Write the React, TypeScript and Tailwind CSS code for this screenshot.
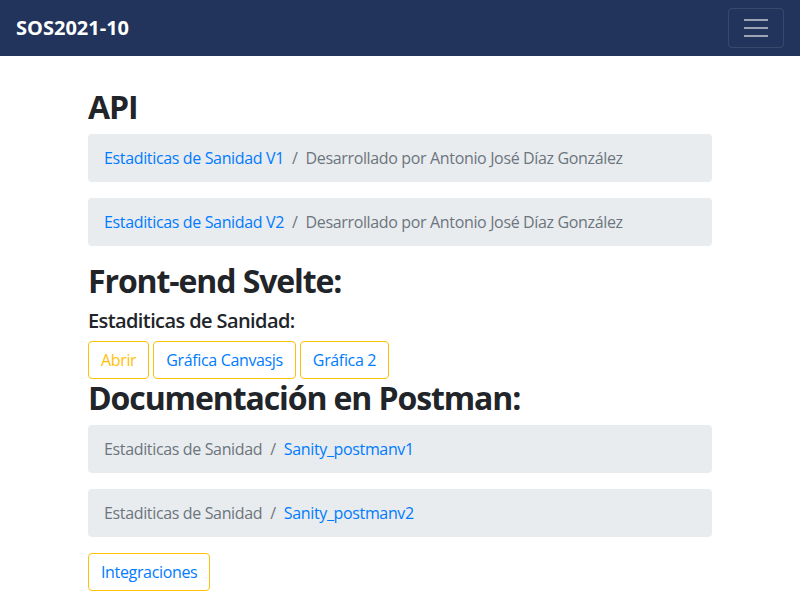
import React from 'react'

const font = { fontFamily: '"Open Sans", "Noto Sans", sans-serif' }

function Crumb({ first, second, firstLink }: { first: string; second: string; firstLink: boolean }) {
  return (
    <nav className="mb-4 rounded bg-[#e9ecef] px-4 py-3 text-base leading-6 tracking-[-0.35px]">
      <ol className="flex">
        <li className={firstLink ? 'text-[#007bff]' : 'text-[#6c757d]'}>{first}</li>
        <li className="pl-2 text-[#6c757d]">
          <span className="pr-2">/</span>
          <span className={firstLink ? 'text-[#6c757d]' : 'text-[#007bff]'}>{second}</span>
        </li>
      </ol>
    </nav>
  )
}

function OutlineButton({ children, orange }: { children: React.ReactNode; orange?: boolean }) {
  return (
    <button
      className={
        'rounded border border-[#ffc107] px-3 py-[6px] text-base leading-6 tracking-[-0.35px] ' +
        (orange ? 'text-[#ffc107]' : 'text-[#007bff]')
      }
    >
      {children}
    </button>
  )
}

export default function App() {
  return (
    <div className="min-h-screen bg-white text-[#212529]" style={font}>
      <header className="flex h-14 items-center justify-between bg-[#22345b] px-4">
        <span className="text-xl font-bold text-white">SOS2021-10</span>
        <button className="flex h-10 w-14 flex-col items-center justify-center gap-[6px] rounded border border-white/10">
          <span className="block h-[2px] w-6 bg-white/55" />
          <span className="block h-[2px] w-6 bg-white/55" />
          <span className="block h-[2px] w-6 bg-white/55" />
        </button>
      </header>

      <main className="mx-auto w-[624px] pt-8">
        <h2 className="mb-2 text-[32px] font-bold leading-[1.2] tracking-[-1.1px]">API</h2>
        <Crumb first="Estaditicas de Sanidad V1" second="Desarrollado por Antonio José Díaz González" firstLink />
        <Crumb first="Estaditicas de Sanidad V2" second="Desarrollado por Antonio José Díaz González" firstLink />

        <h2 className="mb-2 text-[32px] font-bold leading-[1.2] tracking-[-1.1px]">Front-end Svelte:</h2>
        <h5 className="mb-2 text-xl font-semibold leading-[1.2] tracking-[-0.6px]">Estaditicas de Sanidad:</h5>
        <div className="flex gap-1">
          <OutlineButton orange>Abrir</OutlineButton>
          <OutlineButton>Gráfica Canvasjs</OutlineButton>
          <OutlineButton>Gráfica 2</OutlineButton>
        </div>

        <h2 className="mb-2 text-[32px] font-bold leading-[1.2] tracking-[-1.1px]">Documentación en Postman:</h2>
        <Crumb first="Estaditicas de Sanidad" second="Sanity_postmanv1" firstLink={false} />
        <Crumb first="Estaditicas de Sanidad" second="Sanity_postmanv2" firstLink={false} />
        <OutlineButton>Integraciones</OutlineButton>
      </main>
    </div>
  )
}
